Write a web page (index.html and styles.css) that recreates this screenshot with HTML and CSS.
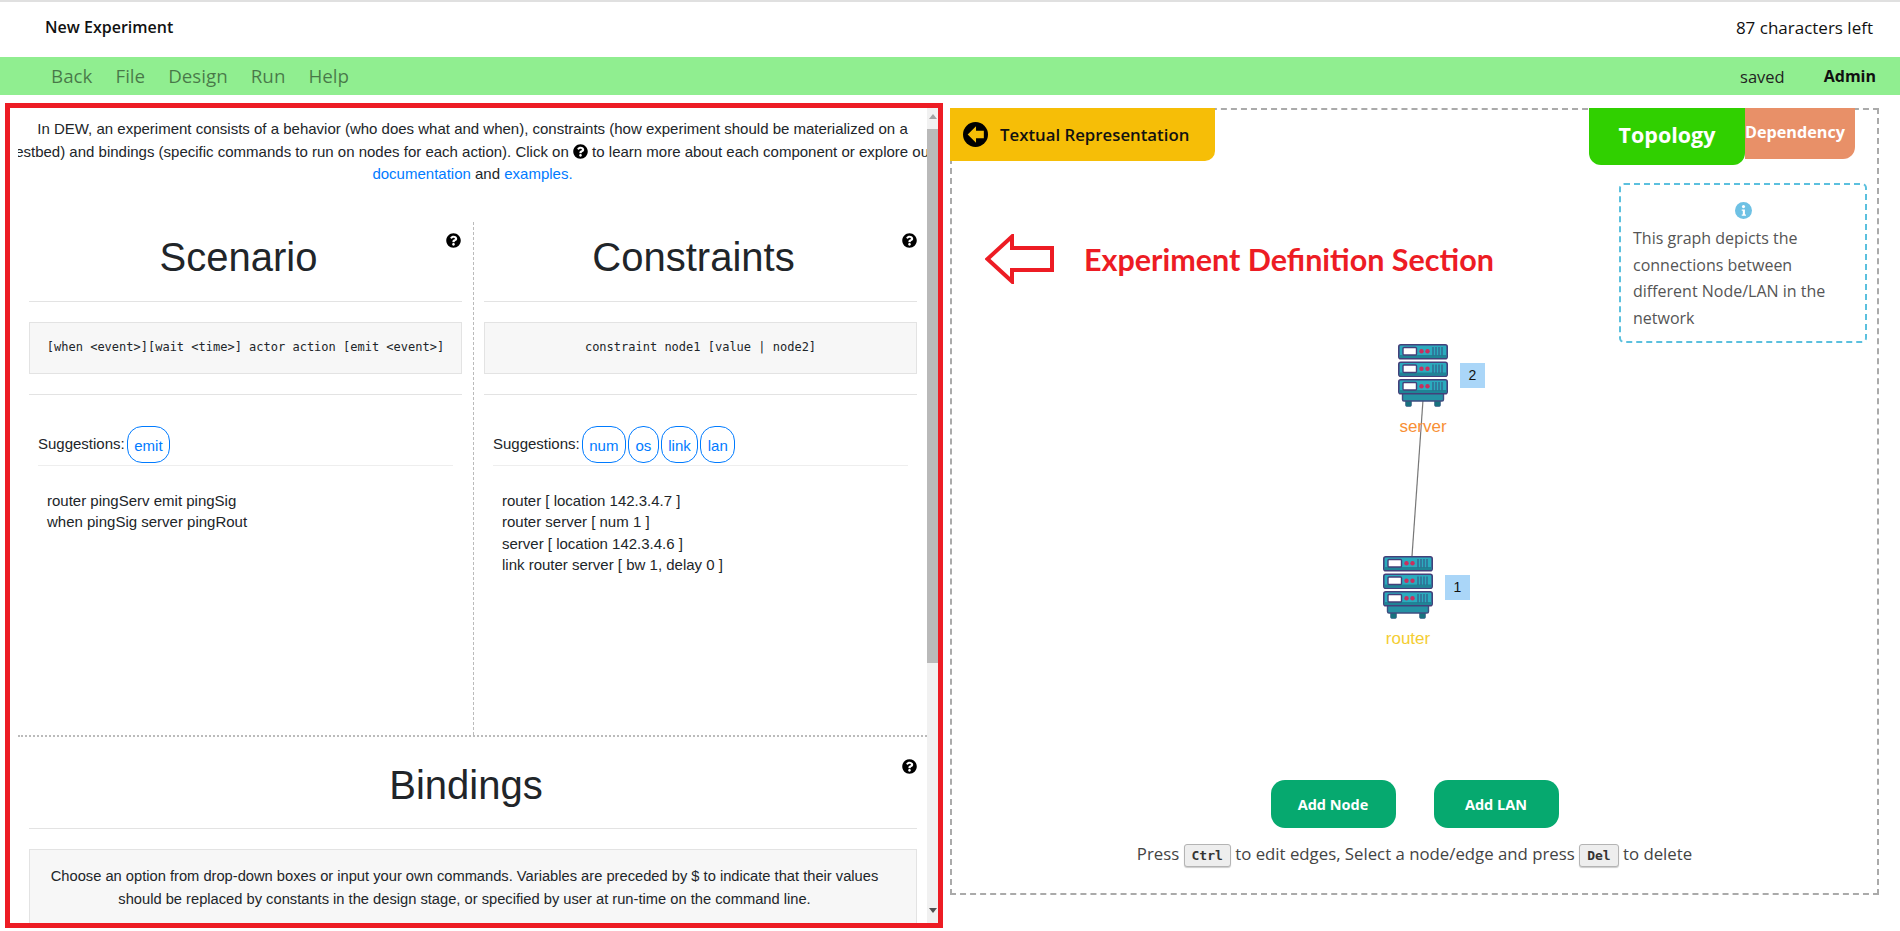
FILE: index.html
```html
<!DOCTYPE html>
<html lang="en">
<head>
    <meta charset="UTF-8">
    <title>New Experiment</title>
    <link rel="stylesheet" href="styles.css">
</head>
<body>
    <svg class="defs" width="0" height="0">
        <symbol id="server" viewBox="0 0 50 63">
            <rect x="7.500" y="55" width="6" height="7.500" rx="1.500" fill="#17727f" stroke="#3d5a86" stroke-width=".6"/>
            <rect x="36.500" y="55" width="6" height="7.500" rx="1.500" fill="#17727f" stroke="#3d5a86" stroke-width=".6"/>
            <rect x="4.500" y="48" width="41" height="9" rx="1.500" fill="#2592a4" stroke="#3f4d80" stroke-width="1.400"/>
            <g id="unit">
                <rect x=".8" y=".8" width="48.400" height="13.900" rx="2" fill="#2aabbe" stroke="#44407a" stroke-width="1.600"/>
                <rect x="1.500" y="11" width="47" height="3" fill="#1f8496"/>
                <rect x="5" y="3.500" width="13.500" height="7.500" rx="1" fill="#fff" stroke="#44407a" stroke-width="1.400"/>
                <circle cx="23.500" cy="7.300" r="2.200" fill="#c9305e"/>
                <circle cx="29.500" cy="7.300" r="2.200" fill="#c9305e"/>
                <path d="M35 3v8.500M38 3v8.500M41 3v8.500M44 3v8.500" stroke="#35608c" stroke-width="1.300"/>
            </g>
            <use href="#unit" y="17.500"/>
            <use href="#unit" y="35"/>
        </symbol>
        <symbol id="help" viewBox="0 0 512 512">
            <path d="M504 256c0 137-111 248-248 248S8 393 8 256 119 8 256 8s248 111 248 248zM263 90c-54 0-89 23-116 64-4 5-2 13 3 17l35 26c5 4 13 3 17-2 18-23 30-36 57-36 20 0 45 13 45 33 0 15-12 22-32 33-23 13-54 30-54 71v6c0 7 5 12 12 12h56c7 0 12-5 12-12v-3c0-29 84-30 84-107 0-58-60-102-119-102zm-7 249c-26 0-46 21-46 46s20 46 46 46 46-21 46-46-20-46-46-46z"/>
        </symbol>
    </svg>

    <header class="title-bar">
        <span class="title">New Experiment</span>
        <span class="chars-left">87 characters left</span>
    </header>

    <nav class="menu-bar">
        <a>Back</a>
        <a>File</a>
        <a>Design</a>
        <a>Run</a>
        <a>Help</a>
        <span class="status">saved</span>
        <span class="user">Admin</span>
    </nav>

    <main class="workspace">
        <section class="editor-frame">
            <div class="editor-scroll">
                <p class="intro">
                    In DEW, an experiment consists of a behavior (who does what and when), constraints (how experiment should be materialized on a<br>
                    testbed) and bindings (specific commands to run on nodes for each action). Click on <svg class="help-inline"><use href="#help"/></svg> to learn more about each component or explore our<br>
                    <a>documentation</a> and <a>examples.</a>
                </p>

                <div class="columns">
                    <div class="column">
                        <svg class="help-icon"><use href="#help"/></svg>
                        <h1>Scenario</h1>
                        <hr>
                        <pre class="syntax">[when &lt;event&gt;][wait &lt;time&gt;] actor action [emit &lt;event&gt;]</pre>
                        <hr>
                        <div class="suggestions">
                            <span>Suggestions:</span>
                            <a class="pill">emit</a>
                        </div>
                        <div class="code-lines">
                            router pingServ emit pingSig<br>
                            when pingSig server pingRout
                        </div>
                    </div>
                    <div class="column column-right">
                        <svg class="help-icon"><use href="#help"/></svg>
                        <h1>Constraints</h1>
                        <hr>
                        <pre class="syntax">constraint node1 [value | node2]</pre>
                        <hr>
                        <div class="suggestions">
                            <span>Suggestions:</span>
                            <a class="pill">num</a>
                            <a class="pill">os</a>
                            <a class="pill">link</a>
                            <a class="pill">lan</a>
                        </div>
                        <div class="code-lines">
                            router [ location 142.3.4.7 ]<br>
                            router server [ num 1 ]<br>
                            server [ location 142.3.4.6 ]<br>
                            link router server [ bw 1, delay 0 ]
                        </div>
                    </div>
                </div>

                <div class="bindings">
                    <svg class="help-icon"><use href="#help"/></svg>
                    <h1>Bindings</h1>
                    <hr>
                    <div class="bindings-note">
                        Choose an option from drop-down boxes or input your own commands. Variables are preceded by $ to indicate that their values<br>
                        should be replaced by constants in the design stage, or specified by user at run-time on the command line.
                    </div>
                </div>
            </div>
            <div class="scrollbar">
                <span class="arrow-up"></span>
                <span class="thumb"></span>
                <span class="arrow-down"></span>
            </div>
        </section>

        <section class="graph-panel">
            <div class="tabs">
                <div class="tab-text">
                    <svg class="tab-icon" viewBox="0 0 24 24">
                        <circle cx="12" cy="12" r="12"/>
                        <path d="M12.500 4 4.500 12l8 8v-4.500H20v-7h-7.500z" fill="#f6be07"/>
                    </svg>
                    Textual Representation
                </div>
                <div class="tab-views">
                    <div class="tab-topology">Topology</div>
                    <div class="tab-dependency">Dependency</div>
                </div>
            </div>

            <div class="graph-area">
                <div class="info-box">
                    <svg class="info-icon" viewBox="0 0 24 24">
                        <circle cx="12" cy="12" r="12" fill="#6ec1e4"/>
                        <circle cx="12" cy="6.500" r="2.200" fill="#fff"/>
                        <path d="M9.500 10.500h4.500v7h1.500v2h-6v-2h1.500v-5h-1.500z" fill="#fff"/>
                    </svg>
                    <p>This graph depicts the connections between different Node/LAN in the network</p>
                </div>

                <svg class="edge" width="60" height="170">
                    <line x1="41" y1="2" x2="30" y2="158" stroke="#777" stroke-width="1.200"/>
                </svg>
                <div class="node node-server">
                    <svg class="node-icon"><use href="#server"/></svg>
                    <span class="node-label">server</span>
                    <span class="node-badge">2</span>
                </div>
                <div class="node node-router">
                    <svg class="node-icon"><use href="#server"/></svg>
                    <span class="node-label">router</span>
                    <span class="node-badge">1</span>
                </div>

                <div class="note">
                    <svg class="note-arrow" width="72" height="50" viewBox="0 0 72 50">
                        <path d="M2.500 25 27 2.500V14h40v22H27v11.500z" fill="#fff" stroke="#ed1c24" stroke-width="4"/>
                    </svg>
                    <span>Experiment Definition Section</span>
                </div>
            </div>

            <div class="graph-actions">
                <button>Add Node</button>
                <button>Add LAN</button>
            </div>
            <p class="graph-help">Press <kbd>Ctrl</kbd> to edit edges, Select a node/edge and press <kbd>Del</kbd> to delete</p>
        </section>
    </main>
</body>
</html>
```

FILE: styles.css
```css
* {
    box-sizing: border-box;
}
html, body {
    height: 100%;
}
body {
    margin: 0;
    background-color: #fff;
    color: #212529;
    font-family: 'Liberation Sans', Arial, sans-serif;
    font-size: 15px;
    overflow: hidden;
}
.defs {
    position: absolute;
}
.title-bar {
    height: 57px;
    border-top: 2px solid #e0e0e0;
    padding: 0 27px 5px 45px;
    display: flex;
    justify-content: space-between;
    align-items: center;
    font-family: 'Open Sans', sans-serif;
    color: #111;
}
.title {
    font-size: 16px;
    font-weight: 600;
}
.chars-left {
    font-size: 17px;
}
.menu-bar {
    height: 38px;
    background-color: #90ee90;
    display: flex;
    align-items: center;
    padding: 0 24px 0 51px;
    font-family: 'Open Sans', sans-serif;
    font-size: 18.800px;
    color: rgba(0, 0, 0, .5);
}
.menu-bar a {
    margin-right: 23px;
}
.status {
    margin-left: auto;
    font-size: 16.500px;
    color: #222;
}
.user {
    margin-left: 39px;
    font-size: 16px;
    font-weight: 700;
    color: #111;
}
.workspace {
    display: flex;
    align-items: flex-start;
    padding: 8px 21px 0 5px;
}

/* left side */
.editor-frame {
    width: 938px;
    height: 825px;
    border: 5px solid #ed1c24;
    display: flex;
    background-color: #fff;
}
.editor-scroll {
    flex: 1;
    min-width: 0;
    overflow: hidden;
    margin-left: 8px;
}
.scrollbar {
    width: 11px;
    background-color: #f1f1f1;
    display: flex;
    flex-direction: column;
    align-items: center;
}
.arrow-up, .arrow-down {
    width: 0;
    height: 0;
    border-left: 4px solid transparent;
    border-right: 4px solid transparent;
}
.arrow-up {
    margin-top: 6px;
    border-bottom: 5px solid #a3a3a3;
}
.arrow-down {
    margin-top: auto;
    margin-bottom: 10px;
    border-top: 5px solid #505050;
}
.thumb {
    width: 100%;
    height: 534px;
    margin-top: 10px;
    background-color: #b9b9b9;
}
.intro {
    margin: 10px -40px 0;
    text-align: center;
    white-space: nowrap;
    line-height: 22.500px;
}
.intro a, .pill {
    color: #007bff;
}
.help-inline {
    width: 15px;
    height: 15px;
    vertical-align: -2px;
}
.columns {
    display: flex;
    margin-top: 36px;
    height: 515px;
    border-bottom: 2px dotted #bbb;
}
.column {
    position: relative;
    width: 456px;
    padding: 0 11px;
    border-right: 1px dashed #bbb;
}
.column-right {
    width: 453px;
    padding: 0 10px;
    border-right: none;
}
.help-icon {
    position: absolute;
    top: 11px;
    right: 12px;
    width: 15px;
    height: 15px;
}
.column-right .help-icon, .bindings .help-icon {
    right: 10px;
}
h1 {
    margin: 0;
    padding-right: 14px;
    font-size: 40px;
    font-weight: 400;
    line-height: 48px;
    text-align: center;
}
hr {
    margin: 0;
    border: none;
    border-top: 1px solid #e3e3e3;
}
.column h1 {
    height: 79px;
    padding-top: 11px;
}
.syntax {
    margin: 20px 0;
    height: 52px;
    line-height: 48px;
    background-color: #f7f7f7;
    border: 1px solid #e3e3e3;
    text-align: center;
    font-family: 'DejaVu Sans Mono', monospace;
    font-size: 12px;
    color: #212529;
}
.suggestions {
    margin: 31px 9px 0;
    height: 40px;
    display: flex;
    align-items: center;
    gap: 2px;
    border-bottom: 1px solid #eee;
    padding-bottom: 2px;
}
.suggestions span {
    margin-top: -2px;
}
.pill {
    height: 37px;
    line-height: 37px;
    padding: 0 6.500px;
    border: 1px solid #007bff;
    border-radius: 15px;
}
.code-lines {
    margin: 24px 0 0 18px;
    line-height: 21.600px;
}
.bindings {
    position: relative;
    padding: 0 10px 0 11px;
}
.bindings .help-icon {
    top: 22px;
}
.bindings h1 {
    height: 91px;
    padding-top: 24px;
}
.bindings-note {
    margin-top: 20px;
    padding: 15px 27px 15px 10px;
    background-color: #f7f7f7;
    border: 1px solid #e3e3e3;
    text-align: center;
    font-size: 14.700px;
    line-height: 23px;
    height: 110px;
}

/* right side */
.graph-panel {
    width: 930px;
    height: 787px;
    margin-left: 7px;
    margin-top: 5px;
    border: 2px dashed #aaa;
    display: flex;
    flex-direction: column;
    font-family: 'Open Sans', sans-serif;
}
.tabs {
    display: flex;
    justify-content: space-between;
    align-items: flex-start;
    margin: -2px 22px 0 -2px;
    height: 57px;
}
.tab-text {
    width: 265px;
    height: 53px;
    background-color: #f6be07;
    border-bottom-right-radius: 10px;
    display: flex;
    align-items: center;
    gap: 12px;
    padding-left: 13px;
    font-size: 16.800px;
    font-weight: 600;
    color: #111;
}
.tab-icon {
    width: 25px;
    height: 25px;
}
.tab-views {
    display: flex;
    align-items: flex-start;
    color: #fff;
    font-weight: 700;
}
.tab-topology {
    width: 156px;
    height: 57px;
    padding-top: 13px;
    background-color: #30d000;
    border-radius: 0 0 12px 12px;
    text-align: center;
    font-size: 21.500px;
    line-height: 28px;
    position: relative;
}
.tab-dependency {
    width: 110px;
    height: 51px;
    padding: 13px 0 0 0;
    background-color: #e89068;
    border-radius: 0 0 12px 0;
    font-size: 16.200px;
    white-space: nowrap;
}
.graph-area {
    position: relative;
    flex: 1;
    display: flex;
    justify-content: flex-end;
    align-items: flex-start;
    padding: 18px 10px 0 0;
}
.info-box {
    width: 248px;
    height: 160px;
    border: 2px dashed #5bc0de;
    border-radius: 5px;
    padding: 17px 12px 0;
    text-align: center;
    color: #555;
    font-size: 16px;
}
.info-icon {
    display: block;
    width: 17px;
    height: 17px;
    margin: 0 auto;
}
.info-box p {
    margin: 6px 0 0;
    text-align: left;
    line-height: 26.600px;
}
.edge {
    position: absolute;
    left: 430px;
    top: 233px;
}
.node {
    position: absolute;
    width: 50px;
    height: 100px;
}
.node-server {
    left: 446px;
    top: 179px;
}
.node-router {
    left: 431px;
    top: 391px;
}
.node-icon {
    display: block;
    width: 50px;
    height: 63px;
}
.node-label {
    position: absolute;
    left: -25px;
    width: 100px;
    top: 73px;
    text-align: center;
    font-family: 'Liberation Sans', sans-serif;
    font-size: 17px;
    color: #f88f35;
}
.node-router .node-label {
    color: #f4cd32;
}
.node-badge {
    position: absolute;
    left: 62px;
    top: 19px;
    width: 25px;
    height: 25px;
    line-height: 25px;
    text-align: center;
    background-color: #aad6f8;
    font-family: 'Liberation Sans', sans-serif;
    font-size: 14px;
    color: #111;
}
.note {
    position: absolute;
    left: 33px;
    top: 69px;
    display: flex;
    align-items: center;
    gap: 27px;
    font-family: Lato, sans-serif;
    font-weight: 700;
    font-size: 30.500px;
    color: #ed1c24;
}
.graph-actions {
    display: flex;
    justify-content: center;
    gap: 38px;
}
.graph-actions button {
    width: 125px;
    height: 48px;
    border: none;
    border-radius: 14px;
    background-color: #06a96f;
    color: #fff;
    font-family: 'Open Sans', sans-serif;
    font-size: 14.500px;
    font-weight: 700;
}
.graph-help {
    margin: 14px 0 27px;
    height: 24px;
    text-align: center;
    font-size: 16.800px;
    line-height: 24px;
    color: #444;
}
kbd {
    display: inline-block;
    padding: 0 7px;
    height: 23px;
    line-height: 21px;
    background-color: #eee;
    border: 1px solid #b4b4b4;
    border-radius: 3px;
    box-shadow: 0 1px 1px rgba(0, 0, 0, .2);
    font-family: 'DejaVu Sans Mono', monospace;
    font-size: 13px;
    font-weight: 700;
    color: #333;
}
```
